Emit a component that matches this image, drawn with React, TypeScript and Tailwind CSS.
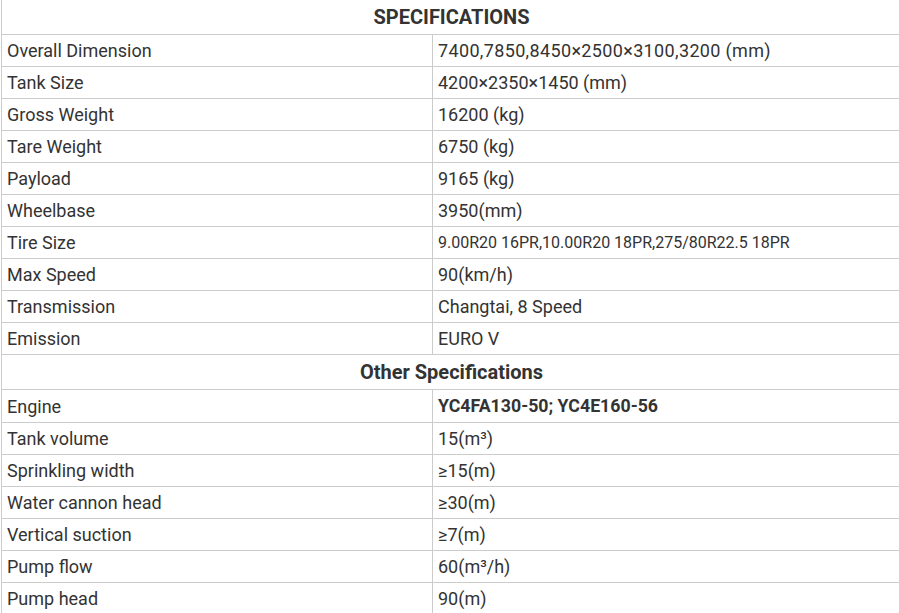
import React from "react";

type Row = { label: string; value: string; small?: boolean; bold?: boolean; tall?: boolean; wide?: boolean };

const specs: Row[] = [
  { label: "Overall Dimension", value: "7400,7850,8450×2500×3100,3200 (mm)", wide: true },
  { label: "Tank Size", value: "4200×2350×1450 (mm)" },
  { label: "Gross Weight", value: "16200 (kg)" },
  { label: "Tare Weight", value: "6750 (kg)" },
  { label: "Payload", value: "9165 (kg)" },
  { label: "Wheelbase", value: "3950(mm)" },
  { label: "Tire Size", value: "9.00R20 16PR,10.00R20 18PR,275/80R22.5 18PR", small: true },
  { label: "Max Speed", value: "90(km/h)" },
  { label: "Transmission", value: "Changtai, 8 Speed" },
  { label: "Emission", value: "EURO V" },
];

const other: Row[] = [
  { label: "Engine", value: "YC4FA130-50; YC4E160-56", bold: true, tall: true },
  { label: "Tank volume", value: "15(m³)" },
  { label: "Sprinkling width", value: "≥15(m)" },
  { label: "Water cannon head", value: "≥30(m)" },
  { label: "Vertical suction", value: "≥7(m)" },
  { label: "Pump flow", value: "60(m³/h)" },
  { label: "Pump head", value: "90(m)" },
];

function DataRow({ r }: { r: Row }) {
  const size = r.small
    ? "text-[16px]"
    : r.bold
    ? "text-[17.75px] font-bold"
    : r.wide
    ? "text-[18px] tracking-[0.35px]"
    : "text-[18px]";
  return (
    <div className={`flex border-b border-[#cccccc] ${r.tall ? "h-[33px]" : "h-[32px]"}`}>
      <div className="w-[431px] shrink-0 border-r border-[#cccccc] pl-[5px] flex items-center text-[18px]">
        {r.label}
      </div>
      <div className={`flex-1 pl-[5px] flex items-center ${size}`}>{r.value}</div>
    </div>
  );
}

function Header({ title }: { title: string }) {
  return (
    <div className="h-[35px] border-b border-[#cccccc] flex items-center justify-center text-[20px] font-bold">
      {title}
    </div>
  );
}

export default function App() {
  return (
    <div className="w-[899px] h-[613px] overflow-hidden bg-white">
      <div
        className="ml-px w-[900px] border-l border-[#cccccc] text-[#333333]"
        style={{ fontFamily: "Roboto, 'Liberation Sans', sans-serif" }}
      >
        <Header title="SPECIFICATIONS" />
        {specs.map((r) => (
          <DataRow key={r.label} r={r} />
        ))}
        <Header title="Other Specifications" />
        {other.map((r) => (
          <DataRow key={r.label} r={r} />
        ))}
      </div>
    </div>
  );
}
